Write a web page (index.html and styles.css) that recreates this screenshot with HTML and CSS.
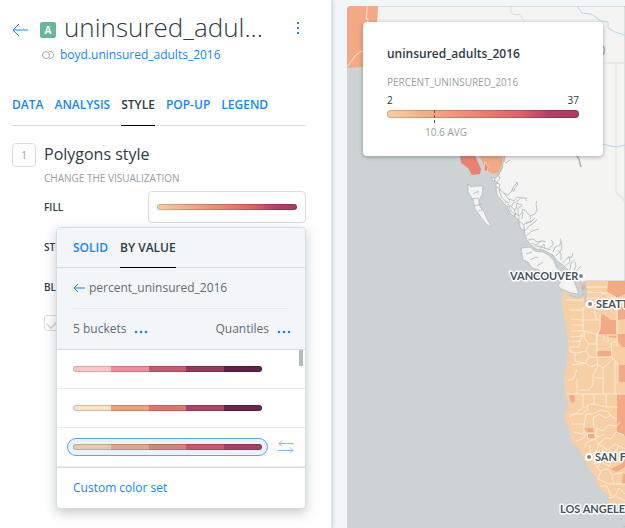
FILE: index.html
```html
<!DOCTYPE html>
<html lang="en">
<head>
<meta charset="utf-8">
<meta name="viewport" content="width=device-width, initial-scale=1">
<title>uninsured_adults_2016</title>
<link rel="stylesheet" href="styles.css">
</head>
<body>
<aside class="sidebar">
  <header class="layer-header">
    <button class="icon-button back" aria-label="Back">
      <svg width="16" height="14" viewBox="0 0 16 14"><path d="M16 7H1M7 1L1 7l6 6"/></svg>
    </button>
    <div class="layer-info">
      <div class="layer-name">
        <span class="badge">A</span>
        <h1>uninsured_adul...</h1>
      </div>
      <div class="layer-source">
        <svg width="12" height="8" viewBox="0 0 12 8"><circle cx="4" cy="4" r="3.5"/><path d="M7 .7a3.5 3.5 0 1 1 0 6.600"/></svg>
        <a href="#">boyd.uninsured_adults_2016</a>
      </div>
    </div>
    <button class="icon-button more" aria-label="Options">
      <svg width="4" height="14" viewBox="0 0 4 14"><path d="M1 1h2v2H1zM1 6h2v2H1zM1 11h2v2H1z"/></svg>
    </button>
  </header>

  <nav class="tabs">
    <button class="tab">DATA</button>
    <button class="tab">ANALYSIS</button>
    <button class="tab active">STYLE</button>
    <button class="tab">POP-UP</button>
    <button class="tab">LEGEND</button>
  </nav>

  <section class="style-section">
    <span class="step">1</span>
    <div class="section-body">
      <h2>Polygons style</h2>
      <p class="caption">CHANGE THE VISUALIZATION</p>
      <div class="field">
        <span class="label" id="fill-label">FILL</span>
        <button class="fill-button" aria-labelledby="fill-label"><span class="ramp smooth"></span></button>
        <div class="popover">
          <div class="popover-head">
            <nav class="tabs popover-tabs">
              <button class="tab solid">SOLID</button>
              <button class="tab active">BY VALUE</button>
            </nav>
            <div class="attribute">
              <button class="icon-button" aria-label="Back to columns">
                <svg width="12" height="10" viewBox="0 0 12 10"><path d="M12 5H1M5 1L1 5l4 4"/></svg>
              </button>
              <span>percent_uninsured_2016</span>
            </div>
            <div class="classification">
              <button class="option">5 buckets <svg width="14" height="4" viewBox="0 0 14 4"><circle cx="2" cy="2" r="1.300"/><circle cx="7" cy="2" r="1.300"/><circle cx="12" cy="2" r="1.300"/></svg></button>
              <button class="option">Quantiles <svg width="14" height="4" viewBox="0 0 14 4"><circle cx="2" cy="2" r="1.300"/><circle cx="7" cy="2" r="1.300"/><circle cx="12" cy="2" r="1.300"/></svg></button>
            </div>
          </div>
          <ul class="ramps">
            <li><button class="ramp-button" aria-label="Burgundy"><span class="ramp pink"></span></button></li>
            <li><button class="ramp-button" aria-label="Plum"><span class="ramp plum"></span></button></li>
            <li>
              <button class="ramp-button selected" aria-label="Sand"><span class="ramp sand"></span></button>
              <button class="icon-button flip" aria-label="Flip ramp">
                <svg width="16" height="14" viewBox="0 0 16 14"><path d="M15.500 3.500H1M4 .5l-3 3 3 3M.5 10.500H15M12 7.500l3 3-3 3"/></svg>
              </button>
            </li>
          </ul>
          <div class="popover-foot"><a href="#">Custom color set</a></div>
        </div>
      </div>
      <div class="field"><span class="label">STROKE</span></div>
      <div class="field"><span class="label">BLENDING</span></div>
      <div class="field check-field"><input class="check" type="checkbox" checked disabled aria-label="Labels"></div>
    </div>
  </section>
</aside>

<main class="map">
  <svg class="map-canvas" viewBox="347 6 278 522" preserveAspectRatio="xMinYMin slice">
    <path class="land" d="M378 6H625V281H586L582 284 578 279 573 273 568 270 563 265 557 261 553 255 543 250 536 249 530 244 527 240 525 235 524 227 520 222 515 217 511 214 507 207 502 201 497 195 496 189 498 184 494 179 499 175 502 167 505 155 360 60z"/>
    <path class="road" d="M511 6v7l5 2 3-1 5 6v8M603 63h22M616 63v129l3 4 3 1 3 6"/>
    <path class="river" d="M577 6l5 7 9 1 6 4 4 3 7 1v6l7 4 10 3M603 144l7 2 7 1 8-2"/>
    <path class="lake" d="M603 46q3 4 0 9M576 155l3 4 2 8"/>
    <path class="inlet" d="M505 156l-1 5 2 2 4-3M503 166l-2 5-5 4M497 174l3 4-3 4 2 5M497 187l4 3-1 4 4 3 2 5M502 196l3-3 3 2 4-4 1-4 5-5M511 191l4-3 3-4-2-2M513 192l2-3M505 203l5-4 4 2 3-4 5 1 4 0v3M507 206l4 2 2-5 5-2 3-4M511 211l5-2 1-6 5 2M514 215l4 0 0-7 4-2M517 217l4-3 2-5 3 2 4 5 5-2 2-4-1-6 1-3M522 219l1-7M530 216l1 5-5 3M523 225l4-3 4 0 4-4M525 231l4-5 5-3 3-4M526 236l6-5 7-2M528 240l5-1 4 3 6-1 3 1M531 243l5 2 5-4M535 246l7 1 5 2 4 1M540 249l4-5 1 5M548 249l5-4 0-3-2-2M553 252l2-5 5-2 1-5-1-2M556 256l4-4 2-4-1-6M561 260l0-6-3-4M563 263l4-5 5-1 1-4M565 266l5-4-1-6M570 270l1-7 4-3M573 273l3-7-1-4M576 276l1-6 4-4"/>
    <path class="island" d="M468 184l3 3 5-1 7 0-1 9-3 5 0 5 5 7 3 7 5 8-5-2-7-9-5-7-2-9-5-8zM521 248l9-1 5 4 8 1 7 4 4 5 3 7 7 5 9 6 3 7 3 8-8-1-10-4-3-4 3-3-8-4-6 0-8-8-7-2-4-6-5-2zM499 189l6 5 5 7-2 2-7-6zM508 204l6 5 2 6-5-4zM491 177l4 1-1 4zM519 221l5 4 0 6-4-4zM496 183l4 1-1 4-3-1zM515 213l4 3 0 4-4-3z"/>
    <path class="inlet" d="M473 194l5-3v3M471 199l8-1M475 206l7-2M478 211l4-1M526 254l6-2M530 260l6-3 2 1M537 266l6-4M552 272l5-2"/>

    <path class="c2" d="M347 6h31l-3 56-13 5-15 1z"/>
    <path class="border" d="M367 6v7l-1 6h2v6h11M347 67l9-12 6-4h16"/>
    <path class="c3" d="M460 155h15l2 5 4 9-1 5-8 1-4-7-7-5z"/>
    <path class="c2" d="M479 155h24l-1 9-3 8-6 2-7-4-3-7z"/>
    <path class="c3 border-shape" d="M485 162l3 5-1 5-3-2z"/>

    <path class="c1" d="M563 291l9 3 9 3 4-2-1-4 2-10h39v222h-15l-2-8-6-4-7-9 2-4-7-7-4-7-5-11-3-6-6-4-1-6-2-9-5-8 1-7 4-10-3-5-2-14 0-8 3-13 1-18-1-14-2-9-3-16z"/>
    <path class="c2" d="M608 281h17v13l-9 4-9-6 1-7zM601 314l5 2 5 4h5v10l1 3v5l-19-3 2-5zM618 309l7-4v14l-7 1zM617 334h8v13h-3l-4-6zM597 351h14l1 5-15 1zM618 365h7v17h-7zM569 395h5l1 4-1 4-3-1zM584 428h9l1 5-8 0zM588 434h6l1 5-7 0zM617 394h8v42l-3-2-5-2zM611 469l10-5 4-5v8l-9 5zM623 474h2v10h-3z"/>
    <path class="border" d="M585 287h22M586 292l22 1 8 4M566 300h19M586 298h12l6-5 4 4 9 1M586 305l8-3 6 5 8 1 9-3M569 310h14l3-5M571 319l14 1h16M572 325h12M583 307v24M594 307l2 12M600 314v15l-3 6h20M571 331h14l14 4M617 298v49M571 337l10-1 4-5M572 342l8-1 3-6M585 332l-1 6 5 6-3 7-9 2-6-1M589 344h7l1-9M597 335v22h15l-1-14 6-2M604 341v-6M608 343v-8M571 353l-1-6h9l1-6M586 351l4 6 7 1M575 353v8l10 2 4-6M572 365l13-2 6 4 6-3 6 4M597 358l1 8-5 9 0 9-4 6-10 0M612 357l6 8v17M603 368v26M603 368l10-9M615 362v32M568 381l6-3 3-9M577 379l0 15M593 378h10M567 394h58M583 394v14l-8 6-6 3M584 408l6-4 4 0v-10M606 394v13h12M588 404l-1 6-5 4-11 0M594 404l12 3M571 424h13l2-10 6 0 9-4 7 2 4 5 5 2M584 424v9h10M594 428l-1-10 6-4 7 4 5-3M574 432l8 2 5-4M576 441l6-2 5-6 1 6h8l0-11 7 3 5-6 9 1 3-4M584 448l3-6 8-3 4 5-2 7-8 4M590 454l0-9M599 444l6-6 6 1 5-7 8 3M599 444l9 6 7-6 10 5M604 448l-3 8 5 4 8-6 5-8M594 434l4 3 7-3M588 457h4l3 7 6-2 0-6M597 468l4-6 8 4 6-8M594 463l6 8 8-2 4 6 11-3M601 471l-3 8 11 5 5 0M600 486h7l4 10M612 476l2 8h11M609 498l6-2 4-8 6 6M616 496l9 5"/>
    <path class="sound" d="M580 281l4 5-1 9-5 3-9-3M584 281l2 8-1 13M582 286l3 4"/>
    <path class="c2" d="M582 285l3 1-1 4-3-1z"/>
    <path class="inlet" d="M620 518l2 2M623 526l2 1"/>

    <g class="city">
      <circle cx="581" cy="276" r="3"/>
      <circle cx="590" cy="304" r="3"/>
      <circle cx="589" cy="457" r="3"/>
    </g>
    <g class="city-name">
      <text x="510" y="280">VANCOUVER</text>
      <text x="596" y="308">SEATTLE</text>
      <text x="595" y="461">SAN FRANCISCO</text>
      <text x="560" y="513">LOS ANGELES</text>
    </g>
  </svg>
  <section class="legend">
    <h3>uninsured_adults_2016</h3>
    <p class="caption">PERCENT_UNINSURED_2016</p>
    <div class="range"><span>2</span><span>37</span></div>
    <div class="legend-ramp"><span class="ramp smooth"></span><i class="average-mark"></i></div>
    <p class="average">10.6 AVG</p>
  </section>
</main>
</body>
</html>
```
FILE: styles.css
```css
* { box-sizing: border-box; }

body {
  margin: 0;
  min-height: 100vh;
  display: flex;
  background: #f2f6f9;
  color: #2e3c43;
  font: 12px/16px "Open Sans", sans-serif;
}

h1, h2, h3, p, ul { margin: 0; padding: 0; font-weight: 400; }
ul { list-style: none; }
a { color: #1785fb; text-decoration: none; }

button {
  margin: 0;
  padding: 0;
  border: 0;
  background: none;
  color: inherit;
  font: inherit;
  cursor: pointer;
}

svg { display: block; }

.icon-button svg { fill: none; stroke: #1785fb; }

/* Sidebar */
.sidebar {
  flex: 0 0 332px;
  padding: 6px 25px 0 12px;
  background: #fff;
  border-right: 1px solid #e2e6e8;
  box-shadow: 0 0 4px rgba(46, 60, 67, 0.3);
  z-index: 1;
}

.layer-header { display: flex; align-items: flex-start; }
.back { padding-top: 17px; }
.more { margin-left: auto; padding: 15px 6px 0 0; }
.more svg { fill: #1785fb; stroke: none; }
.layer-info { margin-left: 12px; }
.layer-name { display: flex; align-items: center; gap: 8px; height: 41px; }

.badge {
  width: 16px;
  height: 16px;
  margin-top: 6px;
  border-radius: 2px;
  background: #68b69b;
  color: #fff;
  font-size: 10px;
  font-weight: 700;
  text-align: center;
}

h1 { font-size: 26px; line-height: 40px; font-weight: 300; }

.layer-source { display: flex; align-items: center; gap: 6px; padding-left: 2px; }
.layer-source svg { fill: none; stroke: #aaa; }

.tabs { display: flex; gap: 12px; border-bottom: 1px solid #ddd; }
.sidebar > .tabs { gap: 11px; margin-top: 22px; }

.tab {
  height: 41px;
  margin-bottom: -1px;
  border-bottom: 1px solid transparent;
  color: #1785fb;
  font-weight: 600;
}
.tab.active { color: #2e3c43; border-color: #000; }

.style-section { display: flex; gap: 8px; padding-top: 17px; }

.step {
  width: 24px;
  height: 24px;
  border: 1px solid #ddd;
  border-radius: 4px;
  color: #979ea1;
  font-size: 10px;
  line-height: 22px;
  text-align: center;
}

.section-body { flex: 1; }
h2 { font-size: 16px; line-height: 22px; }
.caption { color: #979ea1; font-size: 10px; }
.section-body > .caption { margin: 5px 0 1px; }

.field {
  position: relative;
  display: flex;
  align-items: center;
  justify-content: space-between;
  height: 40px;
}
.label { font-size: 10px; font-weight: 600; }

.fill-button {
  width: 158px;
  height: 32px;
  padding: 0 8px;
  border: 1px solid #ddd;
  border-radius: 4px;
}

.ramp {
  display: block;
  height: 6px;
  border: 1px solid rgba(0, 0, 0, 0.16);
  border-radius: 3px;
  background-origin: border-box;
}
.smooth { background-image: linear-gradient(90deg, #f9cfa0, #f2a27e 28%, #ea8371 48%, #dc6169 70%, #b24266 84%, #a63b60); }
.pink { background-image: linear-gradient(90deg, #fec5c3 20%, #f08d99 20% 40%, #c85a70 40% 60%, #963a5c 60% 80%, #632044 80%); }
.plum { background-image: linear-gradient(90deg, #fae2c5 20%, #f29f7e 20% 40%, #e0746d 40% 60%, #b24367 60% 80%, #6d2549 80%); }
.sand { background-image: linear-gradient(90deg, #e4ccab 20%, #e3a586 20% 40%, #d58370 40% 60%, #c95768 60% 80%, #a84061 80%); }

.check-field { height: 32px; }
.check {
  appearance: none;
  width: 16px;
  height: 16px;
  margin: 0;
  border: 1px solid #ddd;
  border-radius: 3px;
  display: grid;
  place-items: center;
}
.check::before {
  content: "";
  width: 8px;
  height: 5px;
  border: solid #ddd;
  border-width: 0 0 2px 2px;
  transform: rotate(-45deg);
}

/* Ramp picker */
.popover {
  position: absolute;
  top: 40px;
  right: 0;
  z-index: 2;
  width: 250px;
  border: 1px solid #d8dde0;
  border-radius: 4px;
  background: #fff;
  box-shadow: 0 4px 12px rgba(46, 60, 67, 0.28);
}

.popover-head { background: #f2f6f9; border-bottom: 1px solid #d5dadd; border-radius: 3px 3px 0 0; }
.popover-tabs { padding: 0 16px; border-color: #d5dadd; }
.popover-tabs .tab { height: 40px; }
.attribute, .classification { display: flex; align-items: center; height: 41px; color: #636d72; }
.attribute { gap: 4px; margin: 0 16px; border-bottom: 1px solid #e5e9eb; }
.classification { height: 40px; justify-content: space-between; padding: 0 14px 0 16px; }
.option { display: flex; align-items: center; gap: 8px; }
.option svg { margin-top: 5px; fill: #1785fb; }

.ramps {
  background: linear-gradient(#b4bbbb, #b4bbbb) right 2px top 0 / 4px 16px no-repeat;
}
.ramps li { display: flex; align-items: center; gap: 10px; height: 39px; padding: 0 10px; border-bottom: 1px solid #e8e8e8; }
.ramp-button { width: 201px; height: 18px; padding: 0 5px; border: 1px solid transparent; border-radius: 9px; }
.selected { border-color: #58a6f8; background: #e8f3ff; }
.flip svg { stroke: #74b6fd; }
.popover-foot { padding: 12px 16px; border-top: 1px solid #ddd; }

/* Map */
.map { position: relative; flex: 1; min-width: 0; margin: 6px 0 0 15px; background: #cdd3d4; border-radius: 4px 0 0 0; overflow: hidden; }
.map-canvas { position: absolute; inset: 0; width: 100%; height: 100%; }

.land, .island { fill: #f4f4f2; stroke: #acb5b9; stroke-width: 0.7; }
.road, .river, .inlet, .border, .lake, .sound { fill: none; }
.road { stroke: #dcdedd; }
.river { stroke: #bad4ec; }
.lake { stroke: #aab3b6; stroke-width: 1.500; }
.inlet { stroke: #aeb8bb; stroke-width: 0.8; }
.sound { stroke: #c3cacd; stroke-width: 2; }
.c1 { fill: #f6cfa5; }
.c2 { fill: #f3a984; }
.c3 { fill: #eb8271; }
.border { stroke: #fbeedf; stroke-width: 0.9; }
.border-shape { stroke: #fae9d6; stroke-width: 0.6; }
.city { fill: #77848b; stroke: #fff; stroke-width: 2; }
.city-name {
  fill: #44545d;
  stroke: #fff;
  stroke-width: 3px;
  stroke-linejoin: round;
  paint-order: stroke;
  font: 700 11px/1 Lato, sans-serif;
}

/* Legend laid over the map */
.legend {
  position: absolute;
  top: 16px;
  left: 16px;
  width: 240px;
  padding: 24px;
  border-radius: 4px;
  background: #fff;
  box-shadow: 0 1px 4px rgba(46, 60, 67, 0.4);
}
.legend h3 { font-size: 12px; font-weight: 600; }
.legend .caption { margin-top: 12px; }
.range { display: flex; justify-content: space-between; margin: 2px 0; font-size: 10px; }
.legend-ramp { position: relative; }
.legend-ramp .ramp { height: 8px; border-radius: 4px; }
.average-mark { position: absolute; top: 0; left: 24.500%; height: 13px; border-left: 1px dashed #555; }
.average { margin: 6px 0 -8px 38px; color: #979ea1; font-size: 10px; }
```
